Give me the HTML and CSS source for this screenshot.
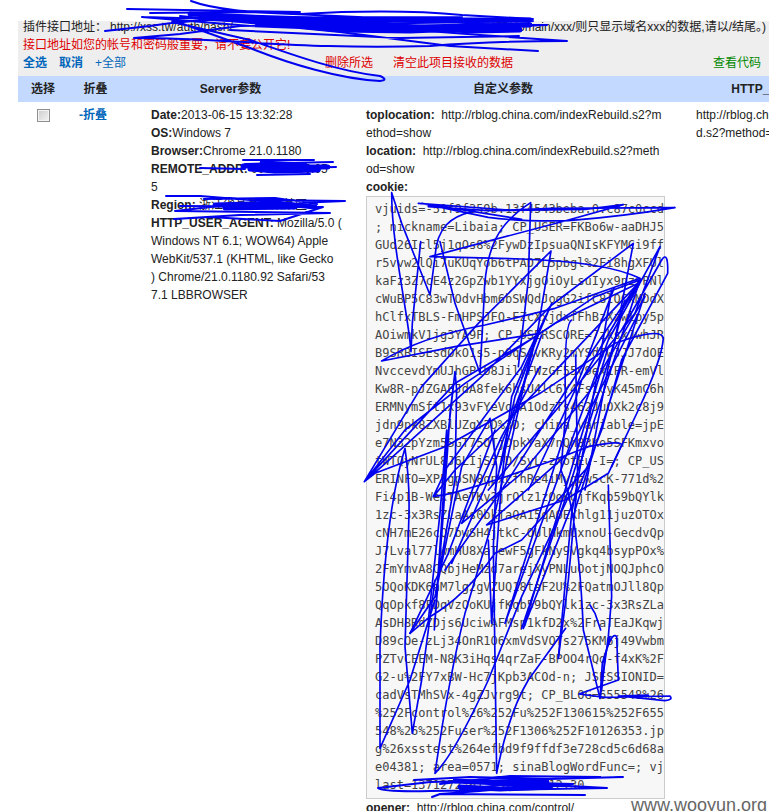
FILE: index.html
```html
<!DOCTYPE html>
<html lang="zh-CN">
<head>
<meta charset="utf-8">
<title>项目数据</title>
<link rel="stylesheet" href="styles.css">
</head>
<body>
<main class="page">
  <header class="panel">
    <div class="line endpoint"><span>插件接口地址：<span class="url">http://xss.tw/auth/hash/</span></span><span>u/a （加/domain/xxx/则只显示域名xxx的数据,请以/结尾。)</span></div>
    <div class="line warn">接口地址如您的帐号和密码般重要，请不要公开它!</div>
    <nav class="line actions">
      <span class="group select"><a href="#all"><b>全选</b></a><a href="#none"><b>取消</b></a><a href="#expand">+全部</a></span>
      <span class="group danger"><a href="#delete">删除所选</a><a href="#clear">清空此项目接收的数据</a></span>
      <a class="code" href="#code">查看代码</a>
    </nav>
  </header>
  <table class="records">
    <colgroup><col class="c-pick"><col class="c-fold"><col class="c-server"><col class="c-custom"><col class="c-http"></colgroup>
    <thead><tr><th>选择</th><th>折叠</th><th>Server参数</th><th>自定义参数</th><th>HTTP_REFERER</th></tr></thead>
    <tbody><tr>
      <td class="pick"><input type="checkbox" aria-label="选择"></td>
      <td class="fold"><a href="#fold">-折叠</a></td>
      <td><b>Date:</b>2013-06-15 13:32:28<br><b>OS:</b>Windows 7<br><b>Browser:</b>Chrome 21.0.1180<br><b>REMOTE_ADDR:</b> 000.000.00.05<br>5<br><b>Region:</b> 浙江省某某市某某区<br><b>HTTP_USER_AGENT:</b> Mozilla/5.0 (<br>Windows NT 6.1; WOW64) Apple<br>WebKit/537.1 (KHTML, like Gecko<br>) Chrome/21.0.1180.92 Safari/53<br>7.1 LBBROWSER</td>
      <td><b>toplocation:</b>&nbsp; http://rblog.china.com/indexRebuild.s2?m<br>ethod=show<br><b>location:</b>&nbsp; http://rblog.china.com/indexRebuild.s2?meth<br>od=show<br><b>cookie:</b>
<pre class="cookie">vjuids=-51f9f359b.13f4543beba.0.c87c0ccd
; nickname=Libaia; CP_USER=FKBo6w-aaDHJ5
GUd26Icl5j1qOs8%2FywDzIpsuaQNIsKFYMCi9ff
r5vvw2lQi7uKUqYob6tPAD7L5pbgl%2Fi8hgXFUl
kaFz3Z7cE4z2GpZwb1YYxjgOiOyLsuIyx9pzyPNl
cWuBP5C83wTOdvHbm6bSWQdJogG2ifC8lQCkMDdX
hClfxTBLS-FmHPSJFQ-EZcXxjdxfFhBzXzwlpy5p
AOiwmkV1jg3YA9P; CP_USERSCORE=7zksxJwhJR
B9SRBISEsdOkO1s5-pOqSAvKRy2mYSdTwJJJ7dOE
NvccevdYmUJhGPib8JilyFWzGF55v9ex1FR-emVl
Kw8R-pJZGAEJdA8fek6hsU4lC6Y4FsiCyK45mC6h
ERMNymSft1x93vFYeVosA1OdzTs462JuOXk2c8j9
jdn9pk8ZXBlUZqY3D%3D; china_variable=jpE
e7N32pYzm5SGT75OTjDpkYaX7nQh83Ko5SFKmxvo
tWTQyNrUL8J6LIjSiTD/SyL-zXotEu-I=; CP_US
ERINFO=XP5gpSN8qpxcfhRe4iMyqzw5cK-771d%2
Fi4p1B-WexTAeTKy2jrOlz1zOoKUjfKqb59bQYlk
1zc-3x3RsZLaAs0bkTaQA15qAOEXhlg11juzOTOx
cNH7mE26cQ7bwSH4jtkC-OUlMkmUxnoU-GecdvQp
J7Lval77lwmHU8XaTewF5gFkNy9Vgkq4bsypPOx%
2FmYmvA8CQbjHeMzd7arejXyPNLuOotjNOQJphcO
5OQoKDK6aM7lg2gVZUQ18taF2U%2FQatmOJll8Qp
QqOpkf8FDqVzOoKUjfKqb59bQYlk1zc-3x3RsZLa
AsDH8RdZDjs6UciwAFMsp1kfD2x%2FraTEaJKqwj
D89cOe-zLj34OnR1O6xmVdSVOTs275KM6j49Vwbm
PZTvCEEM-N8K3iHqs4qrZaF-BPOO4rQd-f4xK%2F
G2-u%2FY7xBW-Hc7jKpb3ACOd-n; JSESSIONID=
cadVsTMhSVx-4gZJvrg9t; CP_BLOG=655548%26
%252Fcontrol%26%252Fu%252F130615%252F655
548%26%252Fuser%252F1306%252F10126353.jp
g%26xsstest%264efbd9f9ffdf3e728cd5c6d68a
e04381; area=0571; sinaBlogWordFunc=; vj
last=1371272361.1371275112.30</pre><b>opener:</b>&nbsp; http://rblog.china.com/control/</td>
      <td>http://rblog.china.com/indexRebuil<br>d.s2?method=show</td>
    </tr></tbody>
  </table>
  <svg class="ink" width="769" height="811" viewBox="0 0 769 811" aria-hidden="true">
    <path d="M191 1C215 10 250 12 300 14C370 10 420 11 462 15L533 19L400 24L142 17M127 9L300 12M150 13L250 12L380 18L500 25L547 25L380 31L250 26L142 17M105 31L150 26C230 14 330 18 462 17M134 38L180 34L240 26L350 24L533 21M134 38C230 38 300 50 430 46Q490 41 567 41L480 35L350 25L210 17M538 51L450 46L340 32L180 16M519 36L400 38L230 30M172 20L250 48C290 64 340 79 380 81Q389 80 380 76C340 72 290 54 250 40L172 22"/>
    <path class="wide" d="M190 14L250 17L310 19L410 20L530 20M200 18L260 21L320 24L420 27L530 25M310 19L400 26L470 31L520 30M250 21L340 30L410 31L460 29M330 28L480 27"/>
    <path d="M200 168L245 169M243 160L314 160M245 164L333 162M250 169L336 167M257 175L310 174"/>
    <path class="wide" d="M243 166L275 166L328 167M250 169L275 171L318 170M262 163L305 165"/>
    <path d="M166 196L200 196L250 200L345 201L220 206L175 211L330 213L240 215L174 219L210 217L280 221L323 207L180 206M204 199L275 198L317 204"/>
    <path class="wide" d="M215 205L275 203L315 207M225 208L295 207"/>
    <g class="fine" transform="translate(355 180) scale(.33333)">
      <path d="M190 70L460 90L590 85L960 83Q800 110 640 122Q500 125 400 112L200 70L500 118M220 80L400 92L690 88L805 74L640 120L225 230L500 237Q750 245 855 295L600 385L390 435Q200 470 80 543L300 500L555 460L720 350L855 300"/>
      <path d="M110 38C110 200 160 400 168 515L172 430L197 185M110 38L140 130L225 345L240 230C245 140 290 110 350 95M255 185L300 370L375 580L387 360C390 200 430 130 527 68L520 300L490 560"/>
      <path d="M28 905L200 620L370 430L588 213L545 470L425 900M28 905L300 610L550 465L480 650L420 930M28 905L150 750L330 610L600 430L850 310M60 880L270 800L555 640L780 490Q920 440 925 475Q920 540 850 690L770 860M60 880L28 905L80 860L380 590L590 375L835 190L780 480L640 930L500 1345"/>
      <path d="M855 300L640 620L440 930L270 1170M855 300L680 600L450 1330L760 480L915 200L840 400L760 500L505 1345L740 750L800 540L938 280Q940 210 920 240L800 450L680 600L400 930M870 340L740 740L660 990"/>
      <path d="M590 370L470 650L440 900L410 1330L400 1080M588 375L500 560L270 870M770 330L720 620L650 1000L610 1435M810 360L760 560L690 930M777 325L660 630L520 930"/>
      <path d="M270 875L235 950L290 940Q500 880 700 800Q800 780 800 795L760 880L630 960L395 1035L640 820L850 400M235 950L300 870L480 700L850 310M320 1030L500 880L700 640L870 350M320 1030L440 770L555 560"/>
      <path d="M300 575L285 700L265 1000L238 1350L275 800L300 575L305 630L300 900L240 1250L165 1360L225 1310Q330 1250 420 1120L500 1080L700 860M290 1150L400 900L560 465M220 1320L255 1000L275 750M240 1250L320 860L405 715L425 860L415 1100L425 1780Q460 1600 520 1500L632 1345"/>
      <path d="M165 1360L280 1120L420 750M75 1705L75 1400Q90 1000 150 805Q164 900 162 1000L150 1400L172 1660L200 1500L240 1200M75 1705L165 1500L240 1260"/>
      <path d="M240 1780Q280 1500 330 1300L420 1000L540 470M240 1780Q300 1720 400 1500L500 1250L650 930L855 300M650 420Q625 430 632 700L618 870Q670 1000 685 1350L735 1555L760 1370L770 1250L760 915M662 525L668 900L640 1200L610 1435"/>
      <path d="M705 1275L720 1300L737 1350M735 1555L742 1450Q770 1350 785 1370L790 1500L672 1542L750 1552L945 1548Q955 1560 930 1562L790 1548L880 1545M740 1530L750 1430L765 1370"/>
    </g>
    <path d="M414 780L470 777L550 779L623 777L430 782L378 788Q382 792 430 791L607 788L500 782L573 784L440 794L585 795L440 794L432 797M440 784L510 776L600 777M460 790L500 785L560 785"/>
    <path class="wide" d="M455 781L500 783L547 782M460 787L500 789L550 787"/>
  </svg>
  <div class="mark">www.wooyun.org</div>
</main>
</body>
</html>
```
FILE: styles.css
```css
* { box-sizing: border-box; }
body {
  margin: 0;
  background: #fff;
  color: #222;
  font: 12px/18px "Liberation Sans", "Noto Sans CJK SC", sans-serif;
}
.page {
  position: relative;
  height: 100vh;
  padding: 21px 0 0 18px;
  overflow: hidden;
}
a { color: #06b; text-decoration: none; }
.panel {
  display: flex;
  flex-direction: column;
  gap: 6px;
  padding: 0 3px 7px 5px;
  background: #eee;
}
.line { line-height: 12px; white-space: nowrap; }
.endpoint { display: flex; justify-content: space-between; }
.url { margin-left: 3px; }
.warn { color: #d00; }
.actions { display: flex; padding-right: 5px; }
.group { display: flex; }
.select { flex: 0 0 302px; gap: 12px; }
.danger { flex: 1; gap: 20px; }
.danger a { color: #d00; }
.actions .code { color: #080; }

.records {
  width: 872px;
  table-layout: fixed;
  border-collapse: collapse;
}
.c-pick { width: 50px; }
.c-fold { width: 55px; }
.c-server { width: 215px; }
.c-custom { width: 330px; }
.c-http { width: 222px; }
th {
  height: 26px;
  padding: 0;
  background: #c3d9ff;
  text-align: center;
}
td {
  padding: 4px 3px 0 28px;
  vertical-align: top;
  white-space: nowrap;
}
.pick { padding: 4px 0 0; text-align: center; }
.pick input {
  appearance: none;
  width: 13px;
  height: 13px;
  margin: 3px 0 0;
  border: 1px solid #8e8f8f;
  background: linear-gradient(135deg, #ccc, #f4f4f4);
  box-shadow: inset 0 0 0 1px #f4f4f4;
}
.fold { padding-left: 11px; font-weight: bold; }
.cookie {
  margin: 0;
  padding: 3px 8px 4px;
  border: 1px solid #ccc;
  background: #f7f7f7;
  color: #444;
  font: 12px/18px "DejaVu Sans Mono", monospace;
}
.ink {
  position: absolute;
  top: 0;
  left: 0;
  fill: none;
  stroke: #0000f0;
  stroke-width: 2;
  stroke-linecap: round;
  stroke-linejoin: round;
  pointer-events: none;
}
.ink .wide { stroke-width: 5; }
.ink .fine { stroke-width: 5; }
.mark {
  position: absolute;
  right: 2px;
  bottom: -4px;
  color: #666;
  font-size: 18px;
  line-height: 20px;
}
```
